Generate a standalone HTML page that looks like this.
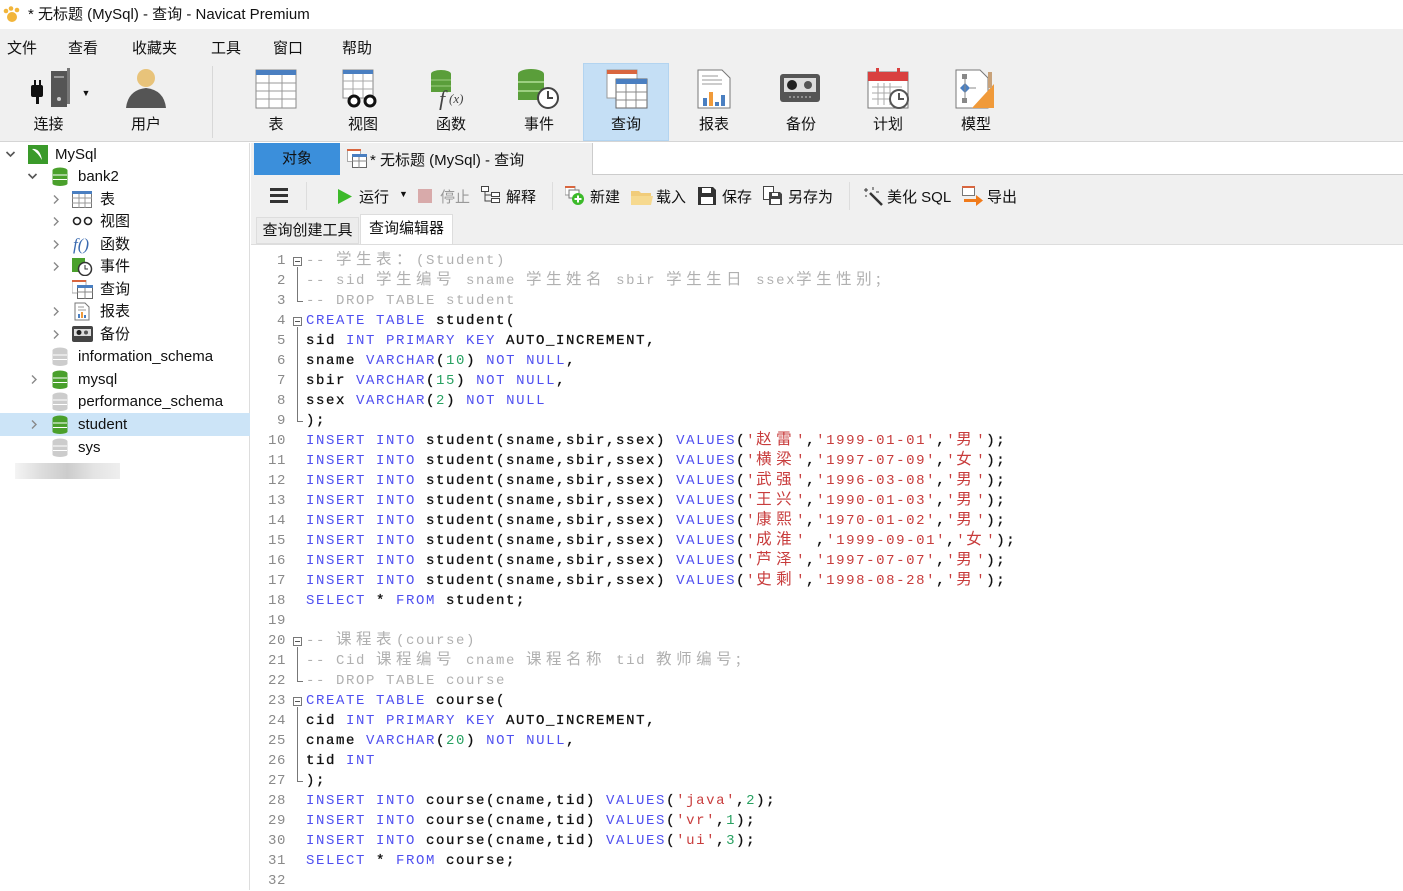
<!DOCTYPE html>
<html><head><meta charset="utf-8">
<style>
*{margin:0;padding:0;box-sizing:border-box}
body{width:1403px;height:890px;overflow:hidden;background:#fff;font-family:"Liberation Sans","Noto Sans CJK SC",sans-serif;font-size:15px;color:#111;position:relative}
.a{position:absolute}
#title{left:0;top:0;width:1403px;height:29px;background:#fff;font-size:15px;line-height:29px;padding-left:28px}
#menu{left:0;top:29px;width:1403px;height:33px;background:#f0f0f0;font-size:15px}
#menu span{position:absolute;top:8px}
#tb{left:0;top:62px;width:1403px;height:80px;background:#f0f0f0;border-bottom:1px solid #d5d5d5}
.tbi{position:absolute;top:2px;width:86px;height:76px;text-align:center}
.tbi svg{position:absolute;left:21px;top:4px}
.tbi span{position:absolute;left:0;right:0;top:49px;font-size:15px}
#side{left:0;top:143px;width:250px;height:747px;background:#fff;border-right:1px solid #ddd}
.tr{position:absolute;height:23px;line-height:23px;font-size:15px;width:250px}
.tr svg{position:absolute}
.chev{position:absolute;top:7px}
#code{left:254px;top:245px;width:1149px;height:645px;background:#fff}
.ln{position:absolute;left:0;width:32px;height:20px;line-height:20px;text-align:right;font-family:"Liberation Mono",monospace;font-size:14px;color:#8a8a8a;letter-spacing:0.6px}
.cl{position:absolute;left:52px;height:20px;line-height:20px;font-family:"Liberation Mono","Noto Sans CJK SC",monospace;font-size:14px;letter-spacing:1.6px;white-space:pre;color:#111;-webkit-text-stroke:0.3px #111}
.cl span{line-height:0;-webkit-text-stroke:0}
.k{color:#5050f0}.s{color:#c83c3c}.n{color:#27a060}.m{color:#b0b0b0}
.c{font-family:"Noto Sans CJK SC",sans-serif;font-size:15.5px;letter-spacing:4.5px}
.fb{position:absolute;left:39px;width:9px;height:9px;border:1px solid #777;background:#fff}
.fb:after{content:"";position:absolute;left:1px;top:3px;width:5px;height:1px;background:#555}
.fl{position:absolute;left:43px;width:1px;background:#777}
.fe{position:absolute;left:43px;width:6px;height:1px;background:#777}
</style></head><body>
<svg width="0" height="0" style="position:absolute"><defs>
<symbol id="cr" viewBox="0 0 8 10"><path d="M2 1L6 5L2 9" fill="none" stroke="#888" stroke-width="1.4"/></symbol>
<symbol id="cd" viewBox="0 0 10 8"><path d="M1 2L5 6L9 2" fill="none" stroke="#555" stroke-width="1.6"/></symbol>
</defs></svg>
<div class="a" id="title"><svg class="a" style="left:3px;top:6px" width="18" height="16"><circle cx="9" cy="11" r="5" fill="#f2b53a"/><circle cx="3" cy="5" r="2.3" fill="#f2b53a"/><circle cx="8" cy="2.5" r="2.3" fill="#f2b53a"/><circle cx="14" cy="4" r="2.3" fill="#f2b53a"/></svg>* 无标题 (MySql) - 查询 - Navicat Premium</div>
<div class="a" id="menu"><span style="left:7px">文件</span><span style="left:68px">查看</span><span style="left:132px">收藏夹</span><span style="left:211px">工具</span><span style="left:273px">窗口</span><span style="left:342px">帮助</span></div>
<div class="a" id="tb">
<div class="a" style="left:212px;top:4px;width:1px;height:72px;background:#d8d8d8"></div>
<div class="tbi" style="left:8px"><svg width="50" height="42"><rect x="22" y="3" width="16" height="36" fill="#555"/><rect x="38" y="0" width="3" height="36" fill="#777"/><rect x="25" y="8" width="10" height="2" fill="#999"/><circle cx="30" cy="31" r="2" fill="#ccc"/><rect x="2" y="17" width="12" height="12" rx="2" fill="#111"/><rect x="5" y="12" width="2" height="6" fill="#111"/><rect x="10" y="12" width="2" height="6" fill="#111"/><rect x="7" y="28" width="3" height="8" fill="#111"/></svg><span style="left:-5px">连接</span><span style="left:70px;top:24px;font-size:9px">▼</span></div>
<div class="tbi" style="left:103px"><svg width="44" height="42"><circle cx="22" cy="10" r="9" fill="#e8c37a"/><path d="M2 40 Q4 22 22 20 Q40 22 42 40Z" fill="#555"/></svg><span>用户</span></div>
<div class="tbi" style="left:233px"><svg width="44" height="42"><rect x="2" y="2" width="40" height="38" fill="#fff" stroke="#888"/><rect x="2" y="2" width="40" height="5" fill="#4a7fc1"/><path d="M2 15H42M2 23H42M2 31H42M15 7V40M28 7V40" stroke="#999"/></svg><span>表</span></div>
<div class="tbi" style="left:320px"><svg width="44" height="42"><rect x="2" y="2" width="30" height="28" fill="#fff" stroke="#888"/><rect x="2" y="2" width="30" height="4" fill="#4a7fc1"/><path d="M2 13H32M2 21H32M12 6V30M22 6V30" stroke="#aaa"/><circle cx="13" cy="33" r="5" fill="#fff" stroke="#111" stroke-width="3"/><circle cx="29" cy="33" r="5" fill="#fff" stroke="#111" stroke-width="3"/></svg><span>视图</span></div>
<div class="tbi" style="left:408px"><svg width="44" height="42"><ellipse cx="12" cy="6" rx="10" ry="4" fill="#5a9e3a"/><rect x="2" y="6" width="20" height="18" fill="#5a9e3a"/><path d="M2 12H22M2 18H22" stroke="#9ccf80"/><text x="10" y="38" font-family="Liberation Serif" font-style="italic" font-size="22" fill="#444">f</text><text x="20" y="35" font-family="Liberation Serif" font-style="italic" font-size="13" fill="#444">(x)</text></svg><span>函数</span></div>
<div class="tbi" style="left:496px"><svg width="44" height="42"><ellipse cx="14" cy="6" rx="13" ry="5" fill="#5a9e3a"/><rect x="1" y="6" width="26" height="26" fill="#5a9e3a"/><path d="M1 14H27M1 23H27" stroke="#9ccf80" stroke-width="2"/><circle cx="31" cy="30" r="10" fill="#fff" stroke="#444" stroke-width="2"/><path d="M31 23V30H36" stroke="#444" stroke-width="2" fill="none"/></svg><span>事件</span></div>
<div class="tbi" style="left:583px;background:#c5dff5;height:78px;top:1px;border:1px solid #b3d4f0"><svg width="44" height="42"><rect x="2" y="2" width="30" height="28" fill="#fff" stroke="#999"/><rect x="2" y="2" width="30" height="4" fill="#d9663f"/><rect x="11" y="11" width="31" height="29" fill="#fff" stroke="#666"/><rect x="11" y="11" width="31" height="5" fill="#4a7fc1"/><path d="M11 24H42M11 32H42M21 16V40M31 16V40" stroke="#888"/></svg><span>查询</span></div>
<div class="tbi" style="left:671px"><svg width="44" height="42"><path d="M6 2H30L38 10V40H6Z" fill="#fff" stroke="#777"/><path d="M10 8H26M10 12H30M10 16H30" stroke="#999"/><rect x="11" y="30" width="4" height="8" fill="#4a7fc1"/><rect x="17" y="24" width="4" height="14" fill="#f09a3a"/><rect x="23" y="34" width="4" height="4" fill="#4a7fc1"/><rect x="29" y="27" width="4" height="11" fill="#4a7fc1"/></svg><span>报表</span></div>
<div class="tbi" style="left:758px"><svg width="44" height="42"><rect x="1" y="6" width="40" height="28" rx="3" fill="#555"/><rect x="5" y="10" width="32" height="14" fill="#ddd"/><circle cx="13" cy="17" r="5" fill="#222"/><circle cx="29" cy="17" r="4" fill="#555"/><path d="M10 29H32" stroke="#ccc" stroke-dasharray="2 2"/></svg><span>备份</span></div>
<div class="tbi" style="left:845px"><svg width="44" height="42"><rect x="2" y="4" width="40" height="36" fill="#fff" stroke="#777"/><rect x="2" y="4" width="40" height="9" fill="#d9403f"/><rect x="10" y="0" width="3" height="8" fill="#d9403f"/><rect x="31" y="0" width="3" height="8" fill="#d9403f"/><path d="M6 19H36M6 25H36M6 31H30M12 15V37M18 15V37M24 15V37" stroke="#aaa"/><circle cx="33" cy="31" r="9" fill="#fff" stroke="#555" stroke-width="2"/><path d="M33 25V31H38" stroke="#555" stroke-width="2" fill="none"/></svg><span>计划</span></div>
<div class="tbi" style="left:933px"><svg width="44" height="42"><path d="M2 2H26L34 10V40H2Z" fill="#fff" stroke="#777"/><rect x="8" y="6" width="5" height="5" fill="#888"/><path d="M6 20L11 15L16 20L11 25Z" fill="#4a7fc1"/><rect x="8" y="30" width="5" height="5" fill="#888"/><path d="M11 11V30M16 20H22" stroke="#888"/><path d="M40 16V40H18Z" fill="#f09a3a"/><rect x="34" y="4" width="4" height="16" fill="#c8a27a"/></svg><span>模型</span></div>
</div>

<div class="a" id="side">
<div class="tr" style="top:0"><svg class="chev" style="left:5px" width="11" height="8"><use href="#cd"/></svg><svg style="left:28px;top:2px" width="20" height="19"><rect width="20" height="19" fill="#3a9a2a"/><path d="M4 4Q12 3 14 15Q10 8 4 4Z" fill="#fff"/></svg><span style="position:absolute;left:55px">MySql</span></div>
<div class="tr" style="top:22px"><svg class="chev" style="left:27px" width="11" height="8"><use href="#cd"/></svg><svg style="left:52px;top:2px" width="16" height="19"><ellipse cx="8" cy="3.5" rx="7.5" ry="3" fill="#4aa02c"/><rect x=".5" y="3.5" width="15" height="13" fill="#4aa02c"/><ellipse cx="8" cy="16.5" rx="7.5" ry="2.5" fill="#4aa02c"/><path d="M1 8H15M1 12.5H15" stroke="#fff"/></svg><span style="position:absolute;left:78px">bank2</span></div>
<div class="tr" style="top:45px"><svg class="chev" style="left:52px;top:6px" width="8" height="11"><use href="#cr"/></svg><svg style="left:72px;top:3px" width="20" height="17"><rect x=".5" y=".5" width="19" height="16" fill="#fff" stroke="#777"/><rect x="0" y="0" width="20" height="3" fill="#4a7fc1"/><path d="M0 7H20M0 12H20M7 3V17M13 3V17" stroke="#999"/></svg><span style="position:absolute;left:100px">表</span></div>
<div class="tr" style="top:67px"><svg class="chev" style="left:52px;top:6px" width="8" height="11"><use href="#cr"/></svg><svg style="left:72px;top:6px" width="22" height="10"><circle cx="5" cy="5" r="3.5" fill="none" stroke="#222" stroke-width="1.6"/><circle cx="16" cy="5" r="3.5" fill="none" stroke="#222" stroke-width="1.6"/></svg><span style="position:absolute;left:100px">视图</span></div>
<div class="tr" style="top:90px"><svg class="chev" style="left:52px;top:6px" width="8" height="11"><use href="#cr"/></svg><span style="position:absolute;left:73px;font-family:'Liberation Serif';font-style:italic;color:#3a6ab0;font-size:17px">f()</span><span style="position:absolute;left:100px">函数</span></div>
<div class="tr" style="top:112px"><svg class="chev" style="left:52px;top:6px" width="8" height="11"><use href="#cr"/></svg><svg style="left:72px;top:2px" width="22" height="19"><rect x="0" y="1" width="13" height="14" fill="#4aa02c"/><circle cx="13" cy="12" r="6.5" fill="#fff" stroke="#333" stroke-width="1.5"/><path d="M13 8V12H16" stroke="#333" fill="none"/></svg><span style="position:absolute;left:100px">事件</span></div>
<div class="tr" style="top:135px"><svg style="left:72px;top:2px" width="22" height="19"><rect x="0" y="0" width="14" height="13" fill="#fff" stroke="#aaa"/><rect x="0" y="0" width="14" height="2" fill="#d9663f"/><rect x="5.5" y="5.5" width="15" height="13" fill="#fff" stroke="#666"/><rect x="5" y="5" width="16" height="3" fill="#4a7fc1"/><path d="M5 12H21M13 8V19" stroke="#888"/></svg><span style="position:absolute;left:100px">查询</span></div>
<div class="tr" style="top:157px"><svg class="chev" style="left:52px;top:6px" width="8" height="11"><use href="#cr"/></svg><svg style="left:74px;top:2px" width="16" height="19"><path d="M1 1H11L15 5V18H1Z" fill="#fff" stroke="#777"/><path d="M4 5H10M4 8H12" stroke="#999"/><rect x="4" y="12" width="2" height="4" fill="#4a7fc1"/><rect x="7" y="10" width="2" height="6" fill="#f09a3a"/><rect x="10" y="13" width="2" height="3" fill="#4a7fc1"/></svg><span style="position:absolute;left:100px">报表</span></div>
<div class="tr" style="top:180px"><svg class="chev" style="left:52px;top:6px" width="8" height="11"><use href="#cr"/></svg><svg style="left:72px;top:3px" width="21" height="16"><rect width="21" height="16" rx="2" fill="#444"/><rect x="2" y="3" width="17" height="7" fill="#ddd"/><circle cx="7" cy="6.5" r="2.5" fill="#222"/><circle cx="14" cy="6.5" r="2" fill="#555"/></svg><span style="position:absolute;left:100px">备份</span></div>
<div class="tr" style="top:202px"><svg style="left:52px;top:2px" width="16" height="19"><ellipse cx="8" cy="3.5" rx="7.5" ry="3" fill="#ccc"/><rect x=".5" y="3.5" width="15" height="13" fill="#ccc"/><ellipse cx="8" cy="16.5" rx="7.5" ry="2.5" fill="#ccc"/><path d="M1 8H15M1 12.5H15" stroke="#fff"/></svg><span style="position:absolute;left:78px">information_schema</span></div>
<div class="tr" style="top:225px"><svg class="chev" style="left:30px;top:6px" width="8" height="11"><use href="#cr"/></svg><svg style="left:52px;top:2px" width="16" height="19"><ellipse cx="8" cy="3.5" rx="7.5" ry="3" fill="#4aa02c"/><rect x=".5" y="3.5" width="15" height="13" fill="#4aa02c"/><ellipse cx="8" cy="16.5" rx="7.5" ry="2.5" fill="#4aa02c"/><path d="M1 8H15M1 12.5H15" stroke="#fff"/></svg><span style="position:absolute;left:78px">mysql</span></div>
<div class="tr" style="top:247px"><svg style="left:52px;top:2px" width="16" height="19"><ellipse cx="8" cy="3.5" rx="7.5" ry="3" fill="#ccc"/><rect x=".5" y="3.5" width="15" height="13" fill="#ccc"/><ellipse cx="8" cy="16.5" rx="7.5" ry="2.5" fill="#ccc"/><path d="M1 8H15M1 12.5H15" stroke="#fff"/></svg><span style="position:absolute;left:78px">performance_schema</span></div>
<div class="tr" style="top:270px;background:#cce4f7"><svg class="chev" style="left:30px;top:6px" width="8" height="11"><use href="#cr"/></svg><svg style="left:52px;top:2px" width="16" height="19"><ellipse cx="8" cy="3.5" rx="7.5" ry="3" fill="#4aa02c"/><rect x=".5" y="3.5" width="15" height="13" fill="#4aa02c"/><ellipse cx="8" cy="16.5" rx="7.5" ry="2.5" fill="#4aa02c"/><path d="M1 8H15M1 12.5H15" stroke="#fff"/></svg><span style="position:absolute;left:78px">student</span></div>
<div class="tr" style="top:293px"><svg style="left:52px;top:2px" width="16" height="19"><ellipse cx="8" cy="3.5" rx="7.5" ry="3" fill="#ccc"/><rect x=".5" y="3.5" width="15" height="13" fill="#ccc"/><ellipse cx="8" cy="16.5" rx="7.5" ry="2.5" fill="#ccc"/><path d="M1 8H15M1 12.5H15" stroke="#fff"/></svg><span style="position:absolute;left:78px">sys</span></div>
<div class="a" style="left:15px;top:320px;width:105px;height:16px;background:linear-gradient(90deg,#f4f4f4,#ddd,#ccc,#e4e4e4,#eee)"></div>
</div>

<div class="a" style="left:251px;top:143px;width:1152px;height:35px;background:#f0f0f0"></div>
<div class="a" style="left:254px;top:143px;width:86px;height:32px;background:#3b8fdb;text-align:center;line-height:32px;font-size:15px">对象</div>
<svg class="a" style="left:347px;top:149px" width="20" height="19"><rect x=".5" y=".5" width="13" height="12" fill="#fff" stroke="#aaa"/><rect x="0" y="0" width="14" height="2" fill="#d9663f"/><rect x="5.5" y="5.5" width="14" height="13" fill="#fff" stroke="#666"/><rect x="5" y="5" width="15" height="3" fill="#4a7fc1"/><path d="M5 12H20M12 8V19" stroke="#888"/></svg>
<div class="a" style="left:370px;top:149px;font-size:15px">* 无标题 (MySql) - 查询</div>
<div class="a" style="left:592px;top:143px;width:811px;height:32px;background:#fff;border-left:1px solid #ccc;border-bottom:1px solid #ccc"></div>
<div class="a" style="left:251px;top:178px;width:1152px;height:67px;background:#f0f0f0"></div>
<div class="a" style="left:270px;top:188px;width:18px;height:3px;background:#333;box-shadow:0 6px 0 #333,0 12px 0 #333"></div>
<div class="a" style="left:306px;top:182px;width:1px;height:28px;background:#ddd"></div>
<svg class="a" style="left:337px;top:188px" width="16" height="17"><path d="M1 1L15 8.5L1 16Z" fill="#3cba2a"/></svg>
<div class="a" style="left:359px;top:186px">运行</div><div class="a" style="left:399px;top:189px;font-size:9px">▼</div>
<div class="a" style="left:418px;top:189px;width:14px;height:14px;background:#d8aaaa"></div>
<div class="a" style="left:440px;top:186px;color:#999">停止</div>
<svg class="a" style="left:481px;top:186px" width="20" height="18"><rect x=".5" y=".5" width="7" height="5" fill="#fff" stroke="#444"/><rect x="10.5" y="6.5" width="8" height="4" fill="#fff" stroke="#444"/><rect x="10.5" y="12.5" width="8" height="4" fill="#fff" stroke="#444"/><path d="M4 6V15H10M4 9H10" stroke="#444" fill="none"/></svg>
<div class="a" style="left:506px;top:186px">解释</div>
<div class="a" style="left:552px;top:182px;width:1px;height:28px;background:#ddd"></div>
<svg class="a" style="left:565px;top:186px" width="20" height="20"><rect x="0" y="0" width="10" height="9" fill="#fff" stroke="#999"/><rect x="0" y="0" width="10" height="2" fill="#d9663f"/><rect x="4" y="4" width="10" height="8" fill="#fff" stroke="#777"/><circle cx="13" cy="13" r="6" fill="#3cba2a"/><path d="M13 9.5V16.5M9.5 13H16.5" stroke="#fff" stroke-width="2"/></svg>
<div class="a" style="left:590px;top:186px">新建</div>
<svg class="a" style="left:631px;top:189px" width="22" height="16"><path d="M0 2H8L10 4H20V16H0Z" fill="#f1cc7a"/><path d="M0 7H22L20 16H0Z" fill="#f6d98f"/></svg>
<div class="a" style="left:656px;top:186px">载入</div>
<svg class="a" style="left:698px;top:187px" width="18" height="18"><path d="M0 0H15L18 3V18H0Z" fill="#333"/><rect x="4" y="1" width="9" height="5" fill="#fff"/><rect x="3" y="10" width="12" height="7" fill="#fff"/></svg>
<div class="a" style="left:722px;top:186px">保存</div>
<svg class="a" style="left:763px;top:186px" width="20" height="20"><rect x=".5" y=".5" width="10" height="13" fill="#fff" stroke="#444"/><path d="M6 6H17L19 8V19H6Z" fill="#444"/><rect x="9" y="7" width="6" height="3" fill="#fff"/><rect x="8" y="13" width="9" height="5" fill="#fff"/></svg>
<div class="a" style="left:788px;top:186px">另存为</div>
<div class="a" style="left:849px;top:182px;width:1px;height:28px;background:#ddd"></div>
<svg class="a" style="left:863px;top:186px" width="20" height="20"><path d="M7 7L19 19" stroke="#333" stroke-width="2.5"/><path d="M3 2V6M1 4H5M10 1V4M13 6H16M2 10H4" stroke="#333"/></svg>
<div class="a" style="left:887px;top:186px">美化 SQL</div>
<svg class="a" style="left:962px;top:186px" width="22" height="20"><rect x=".5" y=".5" width="12" height="9" fill="#fff" stroke="#777"/><rect x="0" y="0" width="13" height="2" fill="#d9663f"/><path d="M2 13H14V9L21 14.5L14 20V16H2Z" fill="#f07a1a"/></svg>
<div class="a" style="left:987px;top:186px">导出</div>
<div class="a" style="left:256px;top:217px;width:103px;height:27px;background:#ececec;border:1px solid #ddd;line-height:26px;text-align:center">查询创建工具</div>
<div class="a" style="left:360px;top:214px;width:93px;height:31px;background:#fff;border:1px solid #ddd;border-bottom:none;line-height:28px;text-align:center">查询编辑器</div>
<div class="a" style="left:251px;top:244px;width:1152px;height:1px;background:#ddd"></div>

<div class="a" id="code">
<div class="ln" style="top:6px">1</div><div class="ln" style="top:26px">2</div><div class="ln" style="top:46px">3</div><div class="ln" style="top:66px">4</div><div class="ln" style="top:86px">5</div><div class="ln" style="top:106px">6</div><div class="ln" style="top:126px">7</div><div class="ln" style="top:146px">8</div><div class="ln" style="top:166px">9</div><div class="ln" style="top:186px">10</div><div class="ln" style="top:206px">11</div><div class="ln" style="top:226px">12</div><div class="ln" style="top:246px">13</div><div class="ln" style="top:266px">14</div><div class="ln" style="top:286px">15</div><div class="ln" style="top:306px">16</div><div class="ln" style="top:326px">17</div><div class="ln" style="top:346px">18</div><div class="ln" style="top:366px">19</div><div class="ln" style="top:386px">20</div><div class="ln" style="top:406px">21</div><div class="ln" style="top:426px">22</div><div class="ln" style="top:446px">23</div><div class="ln" style="top:466px">24</div><div class="ln" style="top:486px">25</div><div class="ln" style="top:506px">26</div><div class="ln" style="top:526px">27</div><div class="ln" style="top:546px">28</div><div class="ln" style="top:566px">29</div><div class="ln" style="top:586px">30</div><div class="ln" style="top:606px">31</div><div class="ln" style="top:626px">32</div>
<div class="fb" style="top:12px"></div><div class="fl" style="top:22px;height:35px"></div><div class="fe" style="top:56px"></div>
<div class="fb" style="top:72px"></div><div class="fl" style="top:82px;height:95px"></div><div class="fe" style="top:176px"></div>
<div class="fb" style="top:392px"></div><div class="fl" style="top:402px;height:35px"></div><div class="fe" style="top:436px"></div>
<div class="fb" style="top:452px"></div><div class="fl" style="top:462px;height:75px"></div><div class="fe" style="top:536px"></div>
<div class="cl" style="top:6px"><span class="m">-- <span class="c">学生表：</span>(Student)</span></div>
<div class="cl" style="top:26px"><span class="m">-- sid <span class="c">学生编号</span> sname <span class="c">学生姓名</span> sbir <span class="c">学生生日</span> ssex<span class="c">学生性别;</span></span></div>
<div class="cl" style="top:46px"><span class="m">-- DROP TABLE student</span></div>
<div class="cl" style="top:66px"><span class="k">CREATE TABLE</span> student(</div>
<div class="cl" style="top:86px">sid <span class="k">INT PRIMARY KEY</span> AUTO_INCREMENT,</div>
<div class="cl" style="top:106px">sname <span class="k">VARCHAR</span>(<span class="n">10</span>) <span class="k">NOT NULL</span>,</div>
<div class="cl" style="top:126px">sbir <span class="k">VARCHAR</span>(<span class="n">15</span>) <span class="k">NOT NULL</span>,</div>
<div class="cl" style="top:146px">ssex <span class="k">VARCHAR</span>(<span class="n">2</span>) <span class="k">NOT NULL</span></div>
<div class="cl" style="top:166px">);</div>
<div class="cl" style="top:186px"><span class="k">INSERT INTO</span> student(sname,sbir,ssex) <span class="k">VALUES</span>(<span class="s">'<span class="c">赵雷</span>'</span>,<span class="s">'1999-01-01'</span>,<span class="s">'<span class="c">男</span>'</span>);</div>
<div class="cl" style="top:206px"><span class="k">INSERT INTO</span> student(sname,sbir,ssex) <span class="k">VALUES</span>(<span class="s">'<span class="c">横梁</span>'</span>,<span class="s">'1997-07-09'</span>,<span class="s">'<span class="c">女</span>'</span>);</div>
<div class="cl" style="top:226px"><span class="k">INSERT INTO</span> student(sname,sbir,ssex) <span class="k">VALUES</span>(<span class="s">'<span class="c">武强</span>'</span>,<span class="s">'1996-03-08'</span>,<span class="s">'<span class="c">男</span>'</span>);</div>
<div class="cl" style="top:246px"><span class="k">INSERT INTO</span> student(sname,sbir,ssex) <span class="k">VALUES</span>(<span class="s">'<span class="c">王兴</span>'</span>,<span class="s">'1990-01-03'</span>,<span class="s">'<span class="c">男</span>'</span>);</div>
<div class="cl" style="top:266px"><span class="k">INSERT INTO</span> student(sname,sbir,ssex) <span class="k">VALUES</span>(<span class="s">'<span class="c">康熙</span>'</span>,<span class="s">'1970-01-02'</span>,<span class="s">'<span class="c">男</span>'</span>);</div>
<div class="cl" style="top:286px"><span class="k">INSERT INTO</span> student(sname,sbir,ssex) <span class="k">VALUES</span>(<span class="s">'<span class="c">成淮</span>'</span> ,<span class="s">'1999-09-01'</span>,<span class="s">'<span class="c">女</span>'</span>);</div>
<div class="cl" style="top:306px"><span class="k">INSERT INTO</span> student(sname,sbir,ssex) <span class="k">VALUES</span>(<span class="s">'<span class="c">芦泽</span>'</span>,<span class="s">'1997-07-07'</span>,<span class="s">'<span class="c">男</span>'</span>);</div>
<div class="cl" style="top:326px"><span class="k">INSERT INTO</span> student(sname,sbir,ssex) <span class="k">VALUES</span>(<span class="s">'<span class="c">史剩</span>'</span>,<span class="s">'1998-08-28'</span>,<span class="s">'<span class="c">男</span>'</span>);</div>
<div class="cl" style="top:346px"><span class="k">SELECT</span> * <span class="k">FROM</span> student;</div>
<div class="cl" style="top:386px"><span class="m">-- <span class="c">课程表</span>(course)</span></div>
<div class="cl" style="top:406px"><span class="m">-- Cid <span class="c">课程编号</span> cname <span class="c">课程名称</span> tid <span class="c">教师编号;</span></span></div>
<div class="cl" style="top:426px"><span class="m">-- DROP TABLE course</span></div>
<div class="cl" style="top:446px"><span class="k">CREATE TABLE</span> course(</div>
<div class="cl" style="top:466px">cid <span class="k">INT PRIMARY KEY</span> AUTO_INCREMENT,</div>
<div class="cl" style="top:486px">cname <span class="k">VARCHAR</span>(<span class="n">20</span>) <span class="k">NOT NULL</span>,</div>
<div class="cl" style="top:506px">tid <span class="k">INT</span></div>
<div class="cl" style="top:526px">);</div>
<div class="cl" style="top:546px"><span class="k">INSERT INTO</span> course(cname,tid) <span class="k">VALUES</span>(<span class="s">'java'</span>,<span class="n">2</span>);</div>
<div class="cl" style="top:566px"><span class="k">INSERT INTO</span> course(cname,tid) <span class="k">VALUES</span>(<span class="s">'vr'</span>,<span class="n">1</span>);</div>
<div class="cl" style="top:586px"><span class="k">INSERT INTO</span> course(cname,tid) <span class="k">VALUES</span>(<span class="s">'ui'</span>,<span class="n">3</span>);</div>
<div class="cl" style="top:606px"><span class="k">SELECT</span> * <span class="k">FROM</span> course;</div>
</div>
</body></html>
